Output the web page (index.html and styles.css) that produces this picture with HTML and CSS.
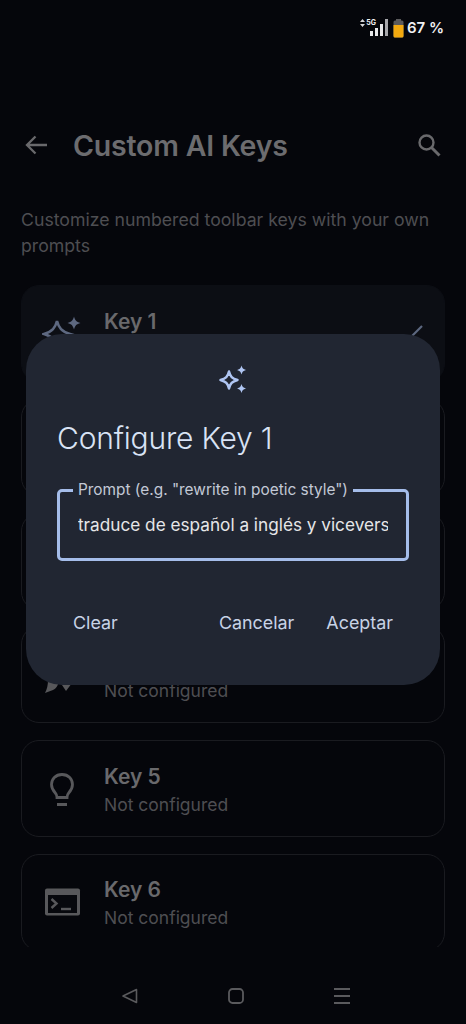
FILE: index.html
```html
<!DOCTYPE html>
<html>
<head>
    <title>Custom AI Keys</title>
    <meta http-equiv="Content-Type" content="text/html; charset=utf-8"/>
    <link rel="stylesheet" href="styles.css">
</head>
<body>
    <div class="screen">
        <div class="status-bar">
            <span class="net-arrows">
                <svg width="5" height="8" viewBox="0 0 5 8"><path d="M2.500 0L5 3H0zM2.500 8L0 5h5z" fill="#d8d8da"/></svg>
            </span>
            <span class="net-type">5G</span>
            <svg class="signal" width="18" height="17" viewBox="0 0 18 17">
                <rect x="0" y="12" width="3" height="5" fill="#e8e8ea"/>
                <rect x="5" y="9" width="3" height="8" fill="#e8e8ea"/>
                <rect x="10" y="5" width="3" height="12" fill="#e8e8ea"/>
                <rect x="15" y="0" width="3" height="17" fill="#a8a8ac"/>
            </svg>
            <svg class="battery" width="11" height="19" viewBox="0 0 11 19">
                <path d="M3 0h5v2H3z" fill="#5a5a5c"/>
                <rect x="0.500" y="1.500" width="10" height="17" rx="1.500" fill="#5a5a5c"/>
                <path d="M.5 6h10v11a1.500 1.500 0 0 1-1.500 1.500H2A1.500 1.500 0 0 1 .5 17z" fill="#f2a90f"/>
            </svg>
            <span class="battery-text">67 %</span>
        </div>

        <div class="top-bar">
            <svg class="back-icon" width="24" height="24" viewBox="0 0 24 24"><path d="M23 12H3.500M11.500 3.500L3 12l8.500 8.500" fill="none" stroke="#69696c" stroke-width="2.300"/></svg>
            <div class="page-title">Custom AI Keys</div>
            <svg class="search-icon" width="26" height="26" viewBox="0 0 26 26"><circle cx="10.500" cy="10.500" r="7" fill="none" stroke="#69696c" stroke-width="2.400"/><path d="M15.500 15.500l8 8" stroke="#69696c" stroke-width="3"/></svg>
        </div>

        <div class="intro">Customize numbered toolbar keys with your own prompts</div>

        <div class="key-list">
            <div class="key-card filled">
                <svg class="key-icon" width="44" height="44" viewBox="0 0 44 44">
                    <path d="M15 9c1.800 7 4.500 10.500 13 13-8.500 2.500-11.200 6-13 13-1.800-7-4.500-10.500-13-13 8.500-2.500 11.200-6 13-13z" fill="none" stroke="#5d6880" stroke-width="2.600"/>
                    <path d="M32 4.500c1.200 4.200 2.300 5.300 6.500 6.500-4.200 1.200-5.300 2.300-6.500 6.500-1.200-4.200-2.300-5.300-6.500-6.500 4.200-1.200 5.300-2.300 6.500-6.500z" fill="#5d6880"/>
                </svg>
                <div class="key-text">
                    <div class="key-name">Key 1</div>
                    <div class="key-sub">Configured</div>
                </div>
                <svg class="edit-icon" width="20" height="20" viewBox="0 0 20 20"><path d="M3 17L18 2" stroke="#5d6880" stroke-width="2.200"/></svg>
            </div>
            <div class="key-card">
                <div class="key-icon-blank"></div>
                <div class="key-text">
                    <div class="key-name">Key 2</div>
                    <div class="key-sub">Not configured</div>
                </div>
            </div>
            <div class="key-card">
                <div class="key-icon-blank"></div>
                <div class="key-text">
                    <div class="key-name">Key 3</div>
                    <div class="key-sub">Not configured</div>
                </div>
            </div>
            <div class="key-card">
                <svg class="key-icon" width="44" height="44" viewBox="0 0 44 44">
                    <path d="M6 27h10c1 4-1 8-5 10l-8 3c2-4 3-8 3-13zM18 29l12 1-6 8z" fill="#58585b"/>
                </svg>
                <div class="key-text">
                    <div class="key-name">Key 4</div>
                    <div class="key-sub">Not configured</div>
                </div>
            </div>
            <div class="key-card">
                <svg class="key-icon" width="44" height="44" viewBox="0 0 44 44">
                    <path d="M20 7.500c-6.500 0-10.500 4.500-10.500 10 0 4 2 6.500 3.800 8.500 1.200 1.300 1.700 2.500 1.700 4.500h10c0-2 .5-3.200 1.700-4.500 1.800-2 3.800-4.500 3.800-8.500 0-5.500-4-10-10.500-10z" fill="none" stroke="#58585b" stroke-width="2.800"/>
                    <path d="M15 37.500h10" stroke="#58585b" stroke-width="3"/>
                </svg>
                <div class="key-text">
                    <div class="key-name">Key 5</div>
                    <div class="key-sub">Not configured</div>
                </div>
            </div>
            <div class="key-card">
                <svg class="key-icon" width="44" height="44" viewBox="0 0 44 44">
                    <rect x="3" y="8.500" width="35" height="27" rx="2" fill="#58585b"/>
                    <rect x="6" y="15" width="29" height="18" fill="#07080d"/>
                    <path d="M9.500 19l5 4.500-5 4.500" fill="none" stroke="#58585b" stroke-width="2.400"/>
                    <path d="M19 29h10" stroke="#58585b" stroke-width="2.400"/>
                </svg>
                <div class="key-text">
                    <div class="key-name">Key 6</div>
                    <div class="key-sub">Not configured</div>
                </div>
            </div>
        </div>

        <div class="nav-bar">
            <svg width="18" height="18" viewBox="0 0 18 18"><path d="M15.500 2.500v13L2 9z" fill="none" stroke="#5a5a5d" stroke-width="1.600" stroke-linejoin="round"/></svg>
            <svg width="18" height="18" viewBox="0 0 18 18"><rect x="2" y="2" width="14" height="14" rx="3.500" fill="none" stroke="#5a5a5d" stroke-width="1.800"/></svg>
            <svg width="18" height="18" viewBox="0 0 18 18"><path d="M1 2h16M1 9h16M1 16h16" stroke="#5a5a5d" stroke-width="1.800"/></svg>
        </div>

        <div class="dialog">
            <svg class="dialog-icon" width="30" height="30" viewBox="0 0 30 30">
                <path d="M11 6.500c1.300 5 3 7 8.500 8.500-5.500 1.500-7.200 3.500-8.500 8.500-1.300-5-3-7-8.500-8.500 5.500-1.500 7.200-3.500 8.500-8.500z" fill="none" stroke="#b0c6f3" stroke-width="2.500" stroke-linejoin="round"/>
                <path d="M23.500 0.500c.8 2.900 1.600 3.700 4.500 4.500-2.900.8-3.700 1.600-4.500 4.500-.8-2.900-1.600-3.700-4.500-4.500 2.900-.8 3.700-1.600 4.500-4.500zM23.500 19c.8 2.900 1.600 3.700 4.500 4.500-2.900.8-3.700 1.600-4.500 4.500-.8-2.900-1.600-3.700-4.500-4.500 2.900-.8 3.700-1.600 4.500-4.500z" fill="#b0c6f3"/>
            </svg>
            <div class="dialog-title">Configure Key 1</div>
            <fieldset class="prompt-field">
                <legend>Prompt (e.g. "rewrite in poetic style")</legend>
                <div class="prompt-value">traduce de español a inglés y viceversa</div>
            </fieldset>
            <div class="dialog-actions">
                <div class="action">Clear</div>
                <div class="action-spacer"></div>
                <div class="action">Cancelar</div>
                <div class="action">Aceptar</div>
            </div>
        </div>
    </div>
</body>
</html>
```

FILE: styles.css
```css
html {
    height: 100%;
}

body {
    margin: 0;
    padding: 0;
    background: #05060b;
    font-family: 'Inter', sans-serif;
    overflow: hidden;
}

.screen {
    position: relative;
    width: 466px;
    height: 1024px;
    overflow: hidden;
    display: flex;
    flex-direction: column;
}

.status-bar {
    height: 46px;
    padding: 9px 22px 0 0;
    box-sizing: border-box;
    display: flex;
    justify-content: flex-end;
    align-items: flex-start;
    color: #f0f0f2;
    flex-shrink: 0;
}

.net-arrows {
    margin: 10px 1px 0 0;
    line-height: 0;
}

.net-type {
    font-size: 7px;
    font-weight: 700;
    line-height: 8px;
    margin: 10px -6px 0 0;
}

.signal {
    margin: 10px 5px 0 0;
}

.battery {
    margin: 10px 3px 0 0;
}

.battery-text {
    font-size: 15px;
    font-weight: 600;
    line-height: 20px;
    margin-top: 9px;
}

.top-bar {
    height: 48px;
    margin-top: 75px;
    padding: 0 24px;
    display: flex;
    align-items: center;
    flex-shrink: 0;
}

.back-icon {
    margin-right: 25px;
}

.page-title {
    flex: 1;
    font-size: 28.5px;
    font-weight: 600;
    color: #6c6c6f;
    letter-spacing: -0.2px;
}

.intro {
    margin: 38px 21px 0;
    font-size: 17.7px;
    line-height: 26px;
    color: #4e4e52;
    flex-shrink: 0;
}

.key-list {
    margin: 26px 21px 0;
    height: 662px;
    overflow: hidden;
    display: flex;
    flex-direction: column;
    gap: 16.75px;
    flex-shrink: 0;
}

.key-card {
    height: 97px;
    box-sizing: border-box;
    border: 1px solid #1a1b20;
    border-radius: 18px;
    padding: 0 20px;
    display: flex;
    align-items: center;
    flex-shrink: 0;
}

.key-card.filled {
    background: #0c0e14;
    border-color: #0c0e14;
}

.key-icon,
.key-icon-blank {
    width: 44px;
    height: 44px;
    margin-right: 18px;
    flex-shrink: 0;
}

.key-text {
    flex: 1;
    padding-top: 2px;
}

.key-name {
    font-size: 21px;
    font-weight: 600;
    line-height: 29px;
    color: #69696c;
}

.key-sub {
    font-size: 17.5px;
    line-height: 27px;
    color: #4e4e52;
}

.nav-bar {
    flex: 1;
    display: flex;
    justify-content: center;
    align-items: center;
    gap: 88px;
    padding: 20px 0 0 6px;
}

.dialog {
    position: absolute;
    left: 26px;
    top: 334px;
    width: 414px;
    height: 351px;
    box-sizing: border-box;
    padding: 31px 31px 0;
    background: #212632;
    border-radius: 36px;
}

.dialog-icon {
    display: block;
    margin: 0 auto;
}

.dialog-title {
    margin-top: 23px;
    font-size: 30px;
    font-weight: 300;
    line-height: 40px;
    color: #d9e3f5;
    letter-spacing: -0.2px;
}

.prompt-field {
    margin: 23px 0 0;
    padding: 0 18px;
    height: 80px;
    box-sizing: border-box;
    border: 3px solid #a5bdea;
    border-radius: 5px;
    min-width: 0;
    overflow: hidden;
}

.prompt-field legend {
    padding: 0 5px;
    margin-left: -5px;
    font-size: 15.4px;
    line-height: 18px;
    color: #c3c9d6;
}

.prompt-value {
    margin-top: 14px;
    font-size: 17.2px;
    line-height: 24px;
    color: #e6e6e8;
    white-space: nowrap;
    overflow: hidden;
}

.dialog-actions {
    margin-top: 50px;
    padding: 0 16px;
    display: flex;
    gap: 32px;
}

.action-spacer {
    flex: 1;
}

.action {
    font-size: 17.9px;
    line-height: 24px;
    color: #c8d3e6;
}
```
